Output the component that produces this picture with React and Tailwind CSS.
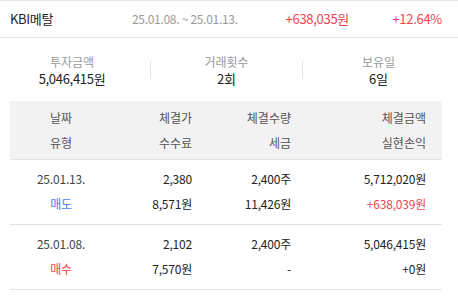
export default function App() {
  const font = { fontFamily: '"Noto Sans CJK KR", "Noto Sans", sans-serif' };
  const rows = [
    {
      date: "25.01.13.", type: "매도", typeColor: "text-[#4a78f0]",
      price: "2,380", fee: "8,571원", qty: "2,400주", tax: "11,426원",
      amount: "5,712,020원", pnl: "+638,039원", pnlColor: "text-[#f04452]",
    },
    {
      date: "25.01.08.", type: "매수", typeColor: "text-[#f04452]",
      price: "2,102", fee: "7,570원", qty: "2,400주", tax: "-",
      amount: "5,046,415원", pnl: "+0원", pnlColor: "text-[#222]",
    },
  ];
  return (
    <div className="w-[458px] h-[301px] bg-white overflow-hidden text-[#222]" style={font}>
      <div className="border-t border-b border-[#e6e6e6] h-[38px] flex items-center pl-[10px] pr-[16px] text-[13px] tracking-[-0.3px]">
        <div className="w-[122px] text-[#222]">KBI메탈</div>
        <div className="w-[150px] text-[12px] text-[#999]">25.01.08. ~ 25.01.13.</div>
        <div className="flex-1 text-right text-[#f04452]">+638,035원</div>
        <div className="w-[93px] text-right text-[#f04452]">+12.64%</div>
      </div>
      <div className="h-[63px] flex items-center">
        <div className="w-[144px] flex flex-col items-center leading-[17px]">
          <div className="text-[12px] text-[#999]">투자금액</div>
          <div className="text-[13px] tracking-[-0.3px]">5,046,415원</div>
        </div>
        <div className="ml-[6px] w-px h-[18px] bg-[#e2e2e2]" />
        <div className="w-[151px] flex flex-col items-center leading-[17px]">
          <div className="text-[12px] text-[#999]">거래횟수</div>
          <div className="text-[13px]">2회</div>
        </div>
        <div className="w-px h-[18px] bg-[#e2e2e2]" />
        <div className="w-[151px] flex flex-col items-center leading-[17px]">
          <div className="text-[12px] text-[#999]">보유일</div>
          <div className="text-[13px]">6일</div>
        </div>
      </div>
      <div className="ml-[10px] w-[432px]">
        <div className="grid grid-cols-[102px_80px_99px_135px] bg-[#f2f2f2] border-b border-[#e3e3e3] py-[4px] text-[12px] leading-[25px] text-[#555]">
          <div className="text-center">날짜</div>
          <div className="text-right">체결가</div>
          <div className="text-right">체결수량</div>
          <div className="text-right">체결금액</div>
          <div className="text-center">유형</div>
          <div className="text-right">수수료</div>
          <div className="text-right">세금</div>
          <div className="text-right">실현손익</div>
        </div>
        {rows.map((r) => (
          <div key={r.date} className="grid grid-cols-[102px_80px_99px_135px] border-b border-[#e3e3e3] pt-[6px] pb-[8px] text-[12px] leading-[25px] text-[#222] tracking-[-0.2px]">
            <div className="text-center text-[#444]">{r.date}</div>
            <div className="text-right">{r.price}</div>
            <div className="text-right">{r.qty}</div>
            <div className="text-right">{r.amount}</div>
            <div className={"text-center " + r.typeColor}>{r.type}</div>
            <div className="text-right">{r.fee}</div>
            <div className="text-right">{r.tax}</div>
            <div className={"text-right " + r.pnlColor}>{r.pnl}</div>
          </div>
        ))}
      </div>
    </div>
  );
}
